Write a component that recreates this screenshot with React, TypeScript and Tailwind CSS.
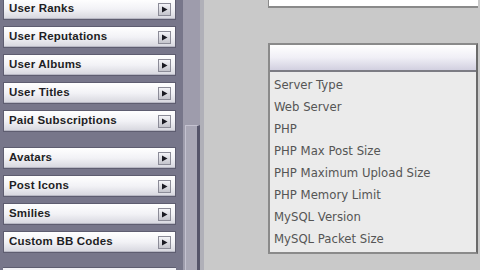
import React from "react";

const group1 = ["User Ranks", "User Reputations", "User Albums", "User Titles", "Paid Subscriptions"];
const group2 = ["Avatars", "Post Icons", "Smilies", "Custom BB Codes"];
const rows = [
  "Server Type",
  "Web Server",
  "PHP",
  "PHP Max Post Size",
  "PHP Maximum Upload Size",
  "PHP Memory Limit",
  "MySQL Version",
  "MySQL Packet Size",
];

function NavButton({ label }: { label: string }) {
  return (
    <div className="h-[22px] w-[173px] shrink-0 flex items-center justify-between pl-[5px] pr-[4px] border border-[#5e5d70] bg-gradient-to-b from-[#ffffff] via-[#f2f2f6] to-[#d6d6de] shadow-[inset_0_-1px_0_#b8b8c4]">
      <span className="text-[11.5px] font-bold text-[#1e1e24] tracking-[0.2px]" style={{ fontFamily: '"Liberation Sans", Arial, sans-serif' }}>
        {label}
      </span>
      <span className="w-[13px] h-[13px] flex items-center justify-center border border-[#8c8c98] bg-gradient-to-b from-[#f4f4f8] to-[#c4c4cc]">
        <svg width="7" height="7" viewBox="0 0 7 7">
          <polygon points="1,0.5 6.5,3.5 1,6.5" fill="#1a1a22" />
        </svg>
      </span>
    </div>
  );
}

export default function App() {
  return (
    <div className="w-[480px] h-[270px] overflow-hidden flex bg-[#c9c9c9]">
      <div className="w-[183px] shrink-0 bg-[#77768a] flex flex-col pl-[3px] pt-0 gap-[6px]">
        <div className="flex flex-col gap-[6px] mt-[-2px]">
          {group1.map((l) => (
            <NavButton key={l} label={l} />
          ))}
        </div>
        <div className="flex flex-col gap-[6px] mt-[9px]">
          {group2.map((l) => (
            <NavButton key={l} label={l} />
          ))}
        </div>
        <div className="mt-[8px] h-[10px] w-[173px] shrink-0 border-t border-[#5e5d70] bg-[#f2f2f6]" />
      </div>
      <div className="w-[17px] shrink-0 bg-[#9e9cac] flex flex-col">
        <div className="h-[125px] shrink-0" />
        <div className="flex-1 ml-[2px] border-t border-l border-[#c4c2d0] bg-[#a9a7b6] border-r-[3px] border-r-[#55546a]" />
      </div>
      <div className="w-[4px] shrink-0 bg-[#b0b0b8]" />
      <div className="flex-1 flex flex-col pl-[64px] pr-[2px]">
        <div className="h-[8px] shrink-0 bg-white border-l border-b-2 border-[#8a8a8a]" />
        <div className="h-[35px] shrink-0" />
        <div className="h-[211px] shrink-0 flex flex-col border-2 border-[#8a8a8a] border-r-[#6a6a6a] bg-[#ebebeb]">
          <div className="h-[27px] shrink-0 border-b-2 border-[#7c7c84] bg-gradient-to-b from-[#ffffff] via-[#f0eff6] to-[#d2d0e0]" />
          <div className="flex flex-col pl-[4px] pt-[3px]">
            {rows.map((r) => (
              <div
                key={r}
                className="h-[22px] flex items-center text-[11.7px] text-[#555555]"
                style={{ fontFamily: '"DejaVu Sans", Verdana, sans-serif' }}
              >
                {r}
              </div>
            ))}
          </div>
        </div>
      </div>
    </div>
  );
}
